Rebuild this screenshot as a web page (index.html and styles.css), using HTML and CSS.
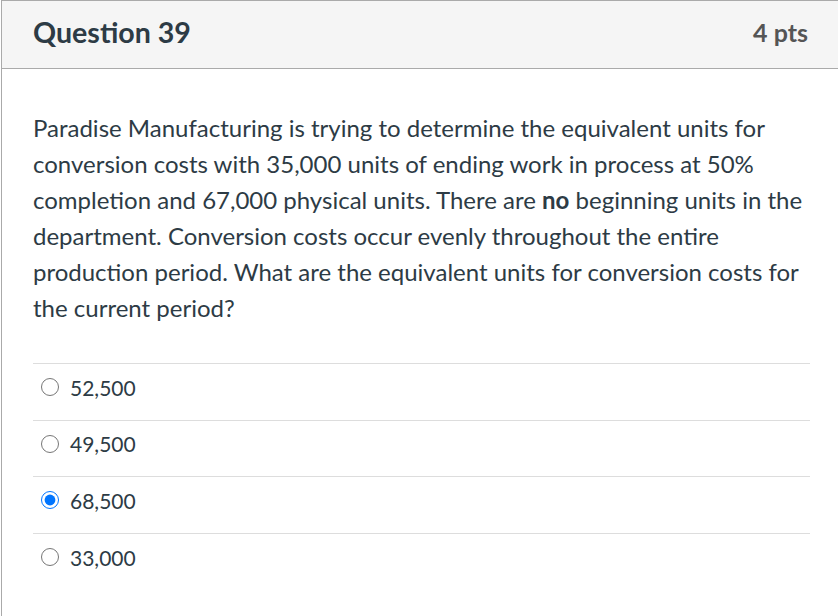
FILE: index.html
```html
<!DOCTYPE html>
<html lang="en">
<head>
<meta charset="utf-8">
<title>Question 39</title>
<link rel="stylesheet" href="styles.css">
</head>
<body>
<div class="question">
  <div class="question-header">
    <h2 class="question-title">Question 39</h2>
    <span class="question-points">4 pts</span>
  </div>
  <div class="question-body">
    <p class="question-text">Paradise Manufacturing is trying to determine the equivalent units for conversion costs with 35,000 units of ending work in process at 50% completion and 67,000 physical units. There are <strong>no</strong> beginning units in the department. Conversion costs occur evenly throughout the entire production period. What are the equivalent units for conversion costs for the current period?</p>
    <div class="answers">
      <label class="answer"><input type="radio" name="q39" class="answer-radio"><span class="answer-text">52,500</span></label>
      <label class="answer"><input type="radio" name="q39" class="answer-radio"><span class="answer-text">49,500</span></label>
      <label class="answer"><input type="radio" name="q39" class="answer-radio" checked><span class="answer-text">68,500</span></label>
      <label class="answer"><input type="radio" name="q39" class="answer-radio"><span class="answer-text">33,000</span></label>
    </div>
  </div>
</div>
</body>
</html>
```

FILE: styles.css
```css
html, body {
  margin: 0;
  padding: 0;
  background: #ffffff;
}

body {
  font-family: Lato, "Open Sans", "Liberation Sans", sans-serif;
  color: #2d3b45;
}

.question {
  margin-left: 1px;
  border-left: 1px solid #aaaaaa;
  border-top: 1px solid #aaaaaa;
  min-height: 615px;
}

.question-header {
  display: flex;
  align-items: center;
  justify-content: space-between;
  box-sizing: border-box;
  height: 68px;
  padding: 0 30px 6px 31px;
  background: #f5f5f5;
  border-bottom: 1px solid #aaaaaa;
}

.question-title {
  margin: 0;
  font-size: 28.6px;
  font-weight: 700;
  color: #2d3b45;
}

.question-points {
  font-size: 25px;
  font-weight: 700;
  color: #555555;
}

.question-body {
  padding: 41px 28px 0 31px;
}

.question-text {
  margin: 0 0 37px 0;
  font-size: 24px;
  line-height: 36px;
}

.answers {
  display: flex;
  flex-direction: column;
}

.answer {
  display: flex;
  align-items: center;
  box-sizing: border-box;
  height: 56.6px;
  border-top: 1px solid #dddddd;
  padding-bottom: 9px;
}

.answer-radio {
  width: 18px;
  height: 18px;
  margin: 0 11px 0 8px;
  accent-color: #0075ff;
}

.answer-text {
  font-size: 21px;
}
```
